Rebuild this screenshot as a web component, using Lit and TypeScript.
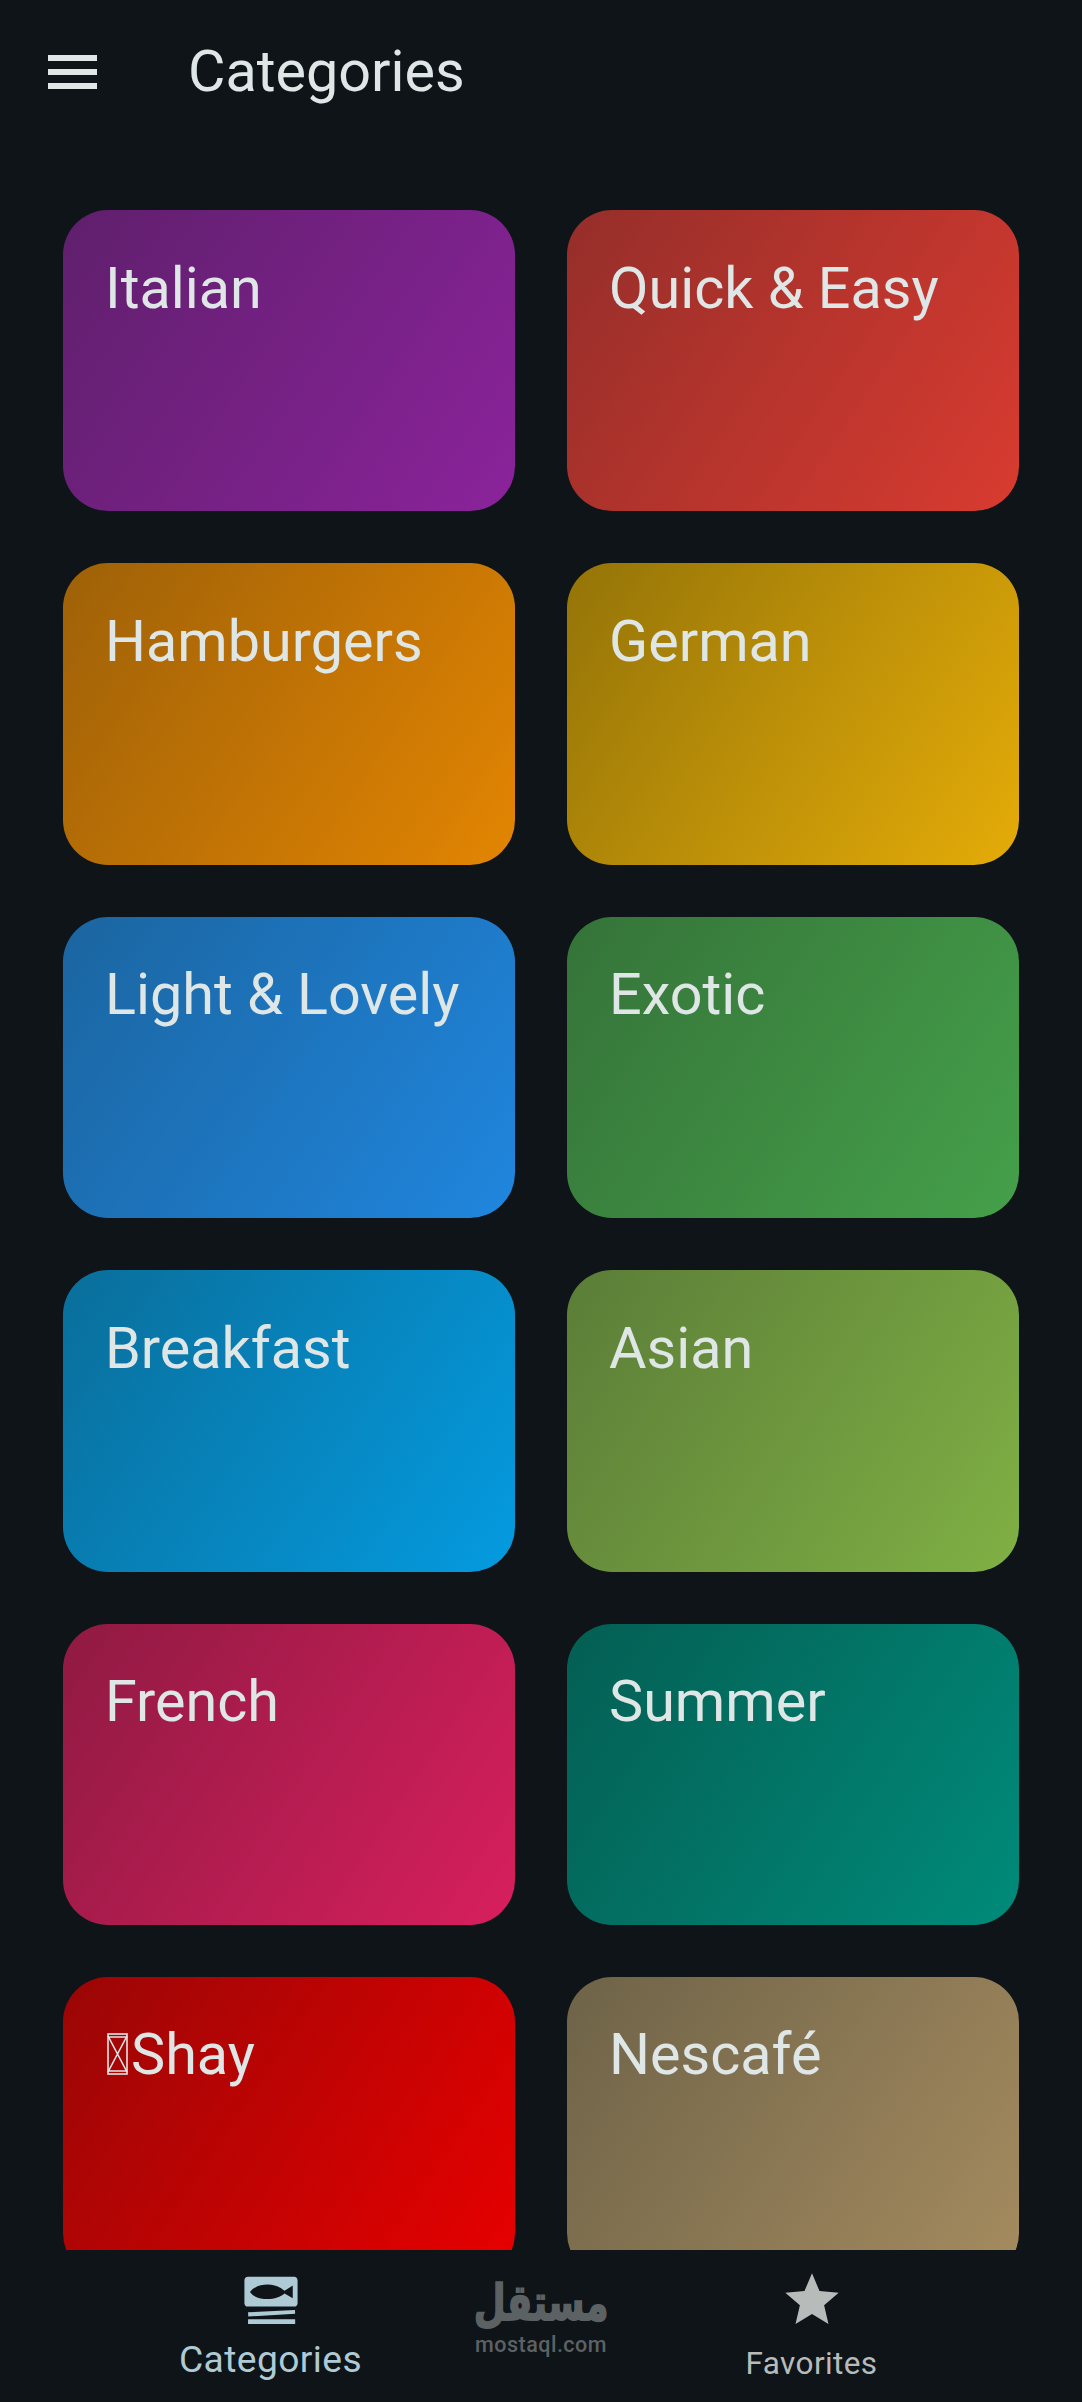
import { LitElement, html, css } from "lit";
import { customElement } from "lit/decorators.js";

const CATS: { t: string; a: string; b: string; tofu?: boolean }[] = [
  { t: "Italian", a: "#5f1f6c", b: "#8b239b" },
  { t: "Quick & Easy", a: "#952e2a", b: "#d93b30" },
  { t: "Hamburgers", a: "#9e6108", b: "#e38502" },
  { t: "German", a: "#947408", b: "#e5ac08" },
  { t: "Light & Lovely", a: "#1b65a0", b: "#2086de" },
  { t: "Exotic", a: "#357339", b: "#45a04a" },
  { t: "Breakfast", a: "#0a6e9a", b: "#049be0" },
  { t: "Asian", a: "#5b7d38", b: "#80b044" },
  { t: "French", a: "#8f1a42", b: "#d81f5e" },
  { t: "Summer", a: "#045e53", b: "#008b7a" },
  { t: "Shay", a: "#9a0606", b: "#e80000", tofu: true },
  { t: "Nescafé", a: "#6e6348", b: "#a58b5f" },
];

@customElement("app-root")
export class AppRoot extends LitElement {
  static styles = css`
    :host {
      display: block;
      width: 1082px;
      height: 2402px;
      background: #0f1418;
      font-family: Roboto, "Liberation Sans", sans-serif;
      color: #dfe6e6;
      overflow: hidden;
      position: relative;
    }
    .page { display: flex; flex-direction: column; height: 2402px; }
    .bar {
      flex: none;
      height: 140px;
      display: flex;
      align-items: center;
      padding: 0 0 0 48px;
      box-sizing: border-box;
    }
    .menu { width: 50px; height: 34px; display: block; margin-top: 4px; }
    .title { font-size: 57.5px; margin-left: 90px; margin-top: 4px; line-height: 1; }
    .body { flex: none; height: 2110px; overflow: hidden; }
    .grid {
      display: grid;
      grid-template-columns: 452px 452px;
      grid-auto-rows: 301.4px;
      gap: 52px;
      padding: 70px 63px 0;
    }
    .card {
      border-radius: 45px;
      padding: 49.5px 42px 0;
      box-sizing: border-box;
      font-size: 57.5px;
      line-height: 1;
      display: flex;
      align-items: flex-start;
    }
    .tofu { width: 21px; height: 42px; margin: 7px 3px 0 2px; flex: none; display: block; }
    .nav { flex: 1; display: grid; grid-template-columns: 1fr 1fr; }
    .tab { display: flex; flex-direction: column; align-items: center; }
    .tab.on { color: #aecbd5; font-size: 37.2px; }
    .tab.off { color: #b7bcbb; font-size: 31.5px; }
    .ic { display: block; fill: currentColor; }
    .on .ic { width: 58px; height: 58px; margin-top: 22px; }
    .on span { margin-top: 11px; line-height: 1; letter-spacing: 0.4px; }
    .off .ic { width: 64px; height: 64px; margin-top: 18px; }
    .off span { margin-top: 16px; line-height: 1; letter-spacing: 0.4px; }
    .mark {
      position: absolute;
      left: 476px;
      top: 2284px;
      width: 130px;
      color: #5c6264;
      display: flex;
      flex-direction: column;
      align-items: center;
      line-height: 1;
    }
    .ar {
      font-family: "DejaVu Sans", sans-serif;
      font-weight: 700;
      font-size: 40px;
      height: 50px;
      -webkit-text-stroke: 1.4px #5c6264;
      transform: scale(0.92, 1.25);
    }
    .la { font-size: 21.5px; font-weight: 500; letter-spacing: 0.5px; }
  `;

  render() {
    return html`
      <div class="page">
        <header class="bar">
          <svg class="menu" viewBox="0 0 50 34" fill="#dfe6e6">
            <rect x="0" y="0" width="49" height="6"></rect>
            <rect x="0" y="14" width="49" height="6"></rect>
            <rect x="0" y="28" width="49" height="6"></rect>
          </svg>
          <div class="title">Categories</div>
        </header>
        <main class="body">
          <div class="grid">
            ${CATS.map(
              (c) => html`
                <div class="card" style="background:linear-gradient(123.7deg, ${c.a}, ${c.b})">
                  ${c.tofu
                    ? html`<svg class="tofu" viewBox="0 0 21 42" fill="none" stroke="#dfe6e6" stroke-width="1.6">
                        <rect x="1" y="1" width="19" height="40"></rect>
                        <path d="M1 3 20 39M20 3 1 39M1 4H20M1 38H20"></path>
                      </svg>`
                    : ""}
                  <span>${c.t}</span>
                </div>
              `
            )}
          </div>
        </main>
        <nav class="nav">
          <div class="tab on">
            <svg class="ic" viewBox="0 0 24 24">
              <path d="M22 17.3 2.6 18.4 2.5 16.7 21.9 15.7zM22 19.6H2.5v1.9H22z"></path>
              <path fill-rule="evenodd" d="M2.4 2H21.6C22.4 2 23 2.7 23 3.5V12.9C23 13.7 22.4 14.3 21.6 14.3H2.4C1.6 14.3 1 13.7 1 12.9V3.5C1 2.7 1.6 2 2.4 2ZM3.3 8.3C5 6 8 5.2 10.5 5.2 13.5 5.2 16 6.3 17.6 7.8L21 5.6V10.9L17.6 8.9C16 10.3 13.5 11.2 10.5 11.2 8 11.2 5 10.7 3.3 8.3Z"></path>
            </svg>
            <span>Categories</span>
          </div>
          <div class="tab off">
            <svg class="ic" viewBox="0 0 24 24">
              <path d="M12 17.27L18.18 21l-1.64-7.03L22 9.24l-7.19-.61L12 2 9.19 8.63 2 9.24l5.46 4.73L5.82 21z"></path>
            </svg>
            <span>Favorites</span>
          </div>
        </nav>
      </div>
      <div class="mark">
        <div class="ar" dir="rtl" lang="ar">مستقل</div>
        <div class="la">mostaql.com</div>
      </div>
    `;
  }
}
